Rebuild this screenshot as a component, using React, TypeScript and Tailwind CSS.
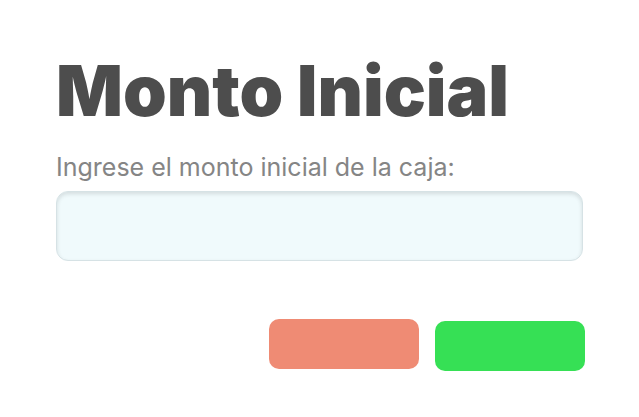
export default function App() {
  return (
    <div className="min-h-screen bg-white font-['Inter',sans-serif]">
      <div className="pl-[56px] pt-[49px]">
        <h1 className="text-[70px] font-black leading-[84px] text-[#4d4d4d]">
          Monto Inicial
        </h1>
        <label className="mt-[19px] block text-[25px] leading-[30px] text-[#858585]">
          Ingrese el monto inicial de la caja:
        </label>
        <input
          type="text"
          className="mt-[9px] block h-[70px] w-[527px] rounded-[12px] border border-[#d6e2e5] bg-[#f0fafc] shadow-[inset_0_2px_4px_rgba(0,0,0,0.12)] outline-none"
        />
        <div className="mt-[58px] flex w-[529px] items-start justify-end gap-[16px]">
          <button className="h-[50px] w-[150px] rounded-[10px] bg-[#ef8b74]" />
          <button className="mt-[2px] h-[50px] w-[150px] rounded-[10px] bg-[#36e055]" />
        </div>
      </div>
    </div>
  );
}
